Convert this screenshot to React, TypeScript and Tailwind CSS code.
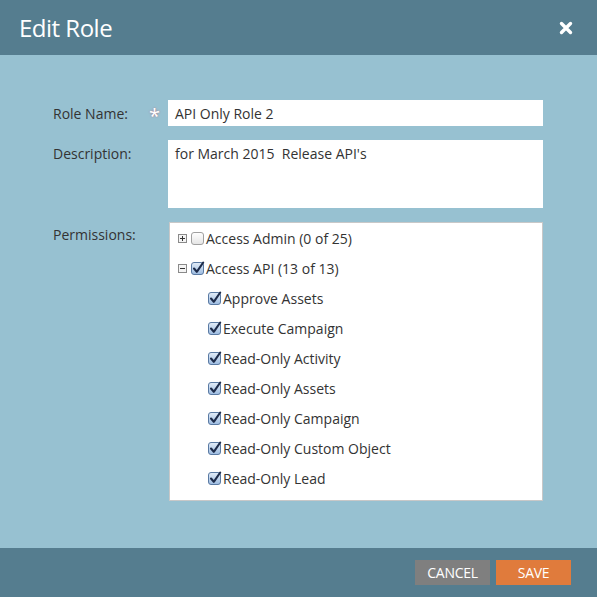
import React from 'react';

const font = { fontFamily: '"Open Sans", "Liberation Sans", sans-serif' };

function Expander({ open }: { open: boolean }) {
  return (
    <svg width="9" height="9" viewBox="0 0 9 9" className="shrink-0">
      <rect x="0.5" y="0.5" width="8" height="8" fill="#f4f4f4" stroke="#8a8a8a" />
      <line x1="2" y1="4.5" x2="7" y2="4.5" stroke="#333" />
      {!open && <line x1="4.5" y1="2" x2="4.5" y2="7" stroke="#333" />}
    </svg>
  );
}

function Check({ checked }: { checked: boolean }) {
  return (
    <svg width="14" height="14" viewBox="0 0 14 14" className="shrink-0">
      <defs>
        <linearGradient id="cbg" x1="0" y1="0" x2="0" y2="1">
          <stop offset="0" stopColor="#e3edf8" />
          <stop offset="1" stopColor="#9cbbe0" />
        </linearGradient>
        <linearGradient id="cbe" x1="0" y1="0" x2="0" y2="1">
          <stop offset="0" stopColor="#ffffff" />
          <stop offset="1" stopColor="#e4e4e4" />
        </linearGradient>
      </defs>
      <rect x="0.5" y="1.5" width="12" height="12" rx="2.5" fill={checked ? 'url(#cbg)' : 'url(#cbe)'} stroke={checked ? '#5a7aa3' : '#a0a0a0'} />
      {checked && <path d="M3 7.5 L5.8 10.8 L12.2 1.5" fill="none" stroke="#1d2b4a" strokeWidth="2.1" strokeLinecap="round" strokeLinejoin="round" />}
    </svg>
  );
}

const children = [
  'Approve Assets',
  'Execute Campaign',
  'Read-Only Activity',
  'Read-Only Assets',
  'Read-Only Campaign',
  'Read-Only Custom Object',
  'Read-Only Lead',
  'Read-Only Opportunity',
];

export default function App() {
  return (
    <div className="w-[597px] h-[597px] flex flex-col bg-[#97c1d1] text-[#333]" style={font}>
      <div className="h-[55px] bg-[#557d8f] flex items-center justify-between pl-[19px] pr-[24px] shrink-0">
        <div className="text-white text-[24px] leading-none tracking-[-0.5px] pt-[1px]">Edit Role</div>
        <svg width="14" height="14" viewBox="0 0 14 14">
          <path d="M2.5 2.5 L11.5 11.5 M11.5 2.5 L2.5 11.5" stroke="#fff" strokeWidth="3.4" strokeLinecap="round" />
        </svg>
      </div>

      <div className="flex-1 pt-[45px] pl-[53px] pr-[54px] text-[14px]">
        <div className="flex items-center h-[26px]">
          <div className="w-[96px]">Role Name:</div>
          <div className="w-[19px] text-white text-[20px] leading-none pt-[6px] [text-shadow:0_0_2px_#b07080]">*</div>
          <div className="flex-1 h-[26px] bg-white flex items-center px-[7px]">API Only Role 2</div>
        </div>

        <div className="flex mt-[14px]">
          <div className="w-[115px] pt-[3px]">Description:</div>
          <div className="flex-1 h-[68px] bg-white px-[7px] pt-[3px] whitespace-pre">for March 2015  Release API's</div>
        </div>

        <div className="flex mt-[14px]">
          <div className="w-[116px] pt-[2px]">Permissions:</div>
          <div className="flex-1 h-[279px] bg-white border border-[#c8c8c8] overflow-hidden">
            <div className="flex items-center h-[30px] pl-[8px] gap-[4px]">
              <Expander open={false} />
              <Check checked={false} />
              <span className="ml-[-3px]">Access Admin (0 of 25)</span>
            </div>
            <div className="flex items-center h-[30px] pl-[8px] gap-[4px]">
              <Expander open={true} />
              <Check checked={true} />
              <span className="ml-[-3px]">Access API (13 of 13)</span>
            </div>
            {children.map((c) => (
              <div key={c} className="flex items-center h-[30px] pl-[38px] gap-[1px]">
                <Check checked={true} />
                <span>{c}</span>
              </div>
            ))}
          </div>
        </div>
      </div>

      <div className="h-[49px] bg-[#557d8f] flex items-center justify-end gap-[6px] pr-[26px] shrink-0">
        <button className="w-[75px] h-[25px] bg-[#7f7f7f] text-white text-[14px] tracking-[-0.3px]">CANCEL</button>
        <button className="w-[75px] h-[25px] bg-[#e07b3c] text-white text-[14px] tracking-[-0.3px]">SAVE</button>
      </div>
    </div>
  );
}
